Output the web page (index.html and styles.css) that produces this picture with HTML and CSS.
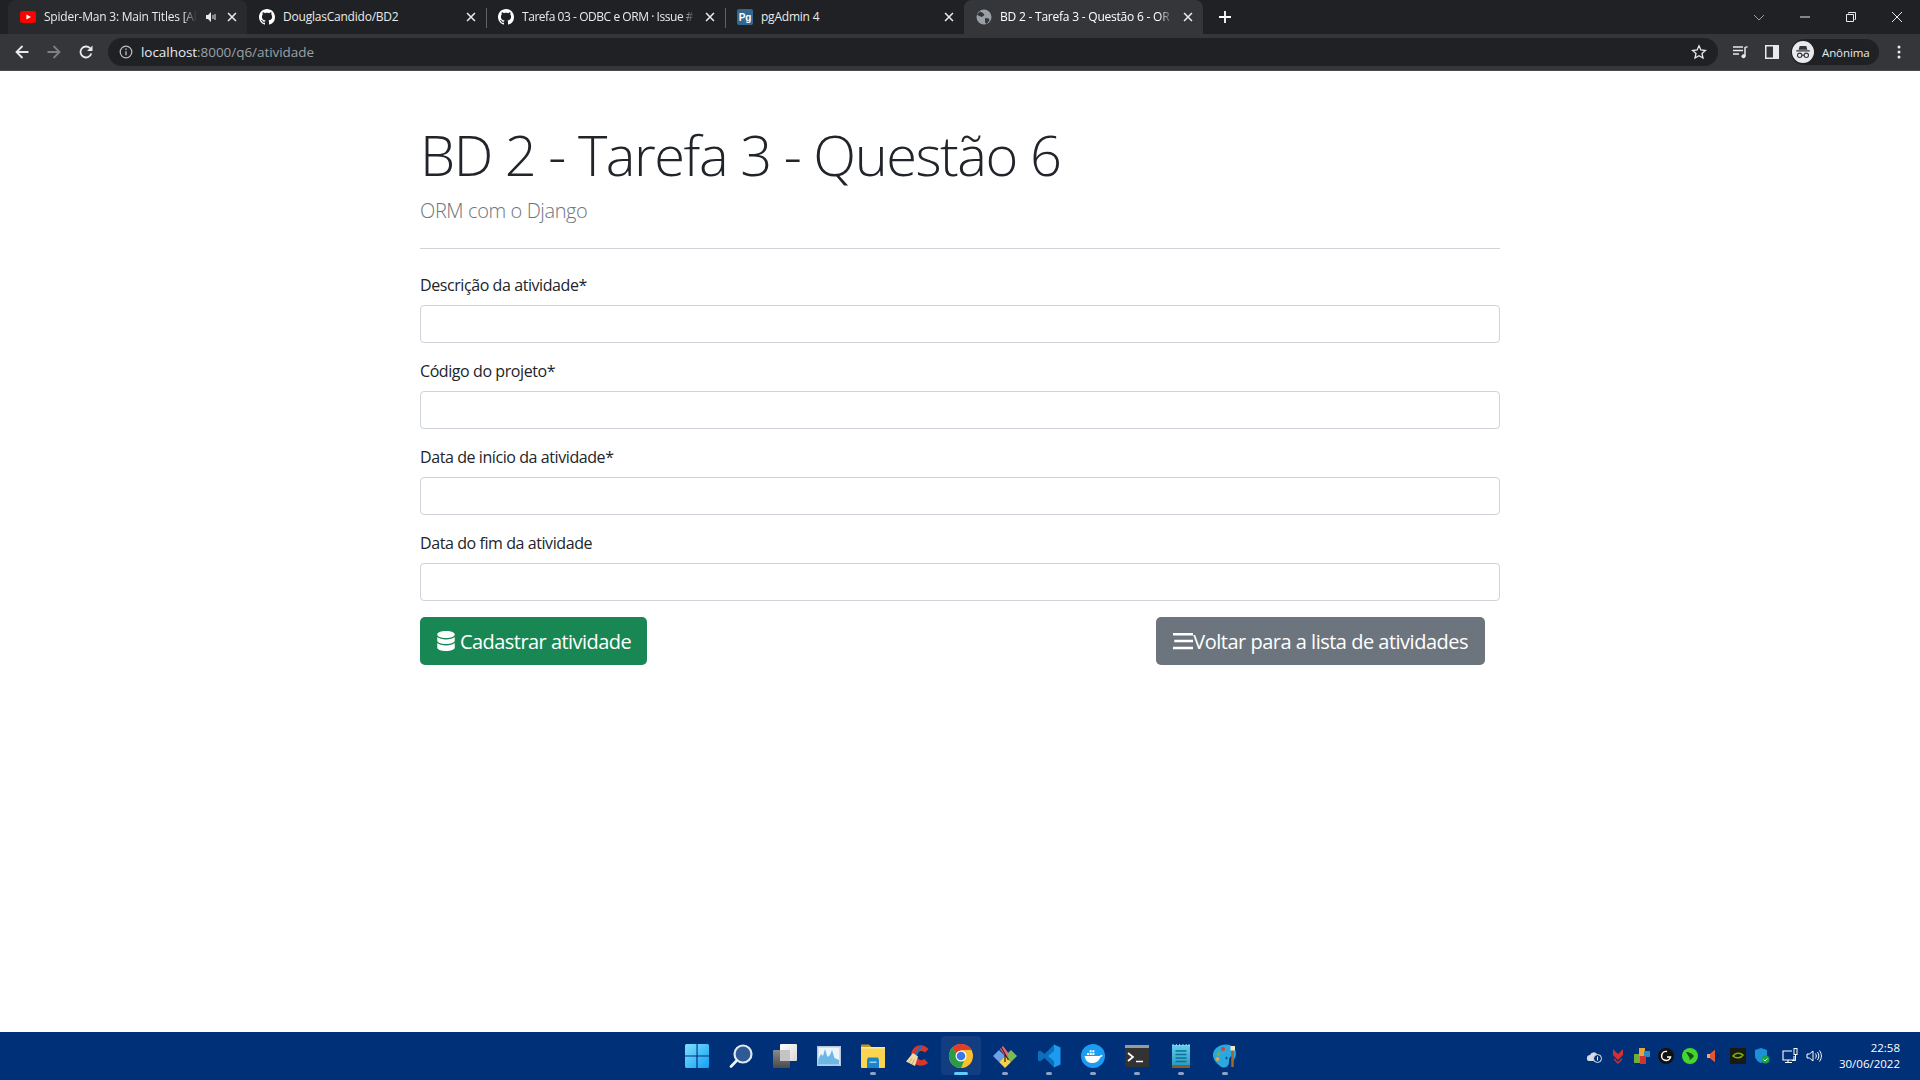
FILE: index.html
```html
<!DOCTYPE html>
<html lang="pt-BR">
<head>
    <meta charset="UTF-8">
    <meta name="viewport" content="width=device-width, initial-scale=1.0">
    <title>BD 2 - Tarefa 3 - Questão 6 - ORM</title>
    <link rel="stylesheet" href="styles.css">
</head>
<body>
    <svg class="sprites" width="0" height="0">
        <defs>
            <linearGradient id="win-blue" x1="0" y1="0" x2="1" y2="1">
                <stop offset="0" stop-color="#7fe0fb"/>
                <stop offset="1" stop-color="#10a0f5"/>
            </linearGradient>
            <linearGradient id="view-back" x1="0" y1="0" x2="1" y2="1">
                <stop offset="0" stop-color="#ffffff"/>
                <stop offset="1" stop-color="#d8d8d8"/>
            </linearGradient>
            <linearGradient id="view-front" x1="0" y1="0" x2="0" y2="1">
                <stop offset="0" stop-color="#8a8a8a"/>
                <stop offset="1" stop-color="#4a4a4a"/>
            </linearGradient>
            <linearGradient id="note-teal" x1="0" y1="0" x2="0" y2="1">
                <stop offset="0" stop-color="#62d0ee"/>
                <stop offset="1" stop-color="#2596bd"/>
            </linearGradient>
        </defs>
        <symbol id="github" viewBox="0 0 16 16">
            <path fill="#fff" d="M8 0C3.58 0 0 3.58 0 8c0 3.54 2.29 6.53 5.47 7.59.4.07.55-.17.55-.38 0-.19-.01-.82-.01-1.49-2.01.37-2.53-.49-2.69-.94-.09-.23-.48-.94-.82-1.13-.28-.15-.68-.52-.01-.53.63-.01 1.08.58 1.23.82.72 1.21 1.87.87 2.33.66.07-.52.28-.87.51-1.07-1.78-.2-3.64-.89-3.64-3.95 0-.87.31-1.59.82-2.15-.08-.2-.36-1.02.08-2.12 0 0 .67-.21 2.2.82.64-.18 1.32-.27 2-.27s1.36.09 2 .27c1.53-1.04 2.2-.82 2.2-.82.44 1.1.16 1.92.08 2.12.51.56.82 1.27.82 2.15 0 3.07-1.87 3.75-3.65 3.95.29.25.54.73.54 1.48 0 1.07-.01 1.93-.01 2.2 0 .21.15.46.55.38A8 8 0 0 0 16 8c0-4.42-3.58-8-8-8z"/>
        </symbol>
        <symbol id="close" viewBox="0 0 16 16">
            <path stroke="#e8eaed" stroke-width="1.8" fill="none" d="M3.5 3.5l9 9M12.5 3.5l-9 9"/>
        </symbol>
    </svg>

    <div class="tabstrip">
        <div class="tab tab-hover">
            <svg class="favicon" viewBox="0 0 16 16"><rect y="2" width="16" height="12" rx="3" fill="#f00"/><path d="M6.4 5.4v5.2L11 8z" fill="#fff"/></svg>
            <span class="tab-title tab-fade">Spider-Man 3: Main Titles [Al</span>
            <svg class="tab-audio" viewBox="0 0 12 12"><path d="M1 4h2l3-3v10L3 8H1z" fill="#e8eaed"/><path d="M8 4v4M10 3v6" stroke="#e8eaed"/></svg>
            <svg class="tab-close"><use href="#close"/></svg>
        </div>
        <div class="tab">
            <svg class="favicon"><use href="#github"/></svg>
            <span class="tab-title">DouglasCandido/BD2</span>
            <svg class="tab-close"><use href="#close"/></svg>
        </div>
        <div class="tab tab-sep">
            <svg class="favicon"><use href="#github"/></svg>
            <span class="tab-title tab-fade tab-title-tight">Tarefa 03 - ODBC e ORM · Issue #</span>
            <svg class="tab-close"><use href="#close"/></svg>
        </div>
        <div class="tab tab-sep">
            <svg class="favicon" viewBox="0 0 16 16"><rect width="16" height="16" rx="2" fill="#336791"/><text x="8" y="12" class="pg-text">Pg</text></svg>
            <span class="tab-title">pgAdmin 4</span>
            <svg class="tab-close"><use href="#close"/></svg>
        </div>
        <div class="tab tab-active">
            <svg class="favicon" viewBox="0 0 16 16"><circle cx="8" cy="8" r="7.5" fill="#9aa0a6"/><path d="M4 2.5l3 1.5 1.5 2-2.500 2-3-1-2-1.500zM9 9l4 .5.500 2-3 3.500-1.500-1.500z" fill="#35363a"/></svg>
            <span class="tab-title tab-fade">BD 2 - Tarefa 3 - Questão 6 - OR</span>
            <svg class="tab-close"><use href="#close"/></svg>
        </div>
        <svg class="new-tab" viewBox="0 0 14 14"><path d="M7 1v12M1 7h12" stroke="#fff" stroke-width="1.800"/></svg>
        <div class="window-controls">
            <svg class="win-icon" viewBox="0 0 12 12"><path d="M1 4l5 5 5-5" stroke="#9aa0a6" fill="none"/></svg>
            <svg class="win-icon" viewBox="0 0 12 12"><path d="M1 6h10" stroke="#e8eaed"/></svg>
            <svg class="win-icon" viewBox="0 0 12 12"><path d="M3.500 2.500V1.500h7v7h-1M1.500 3.500h7v7h-7z" stroke="#e8eaed" fill="none"/></svg>
            <svg class="win-icon" viewBox="0 0 12 12"><path d="M1 1l10 10M11 1L1 11" stroke="#e8eaed"/></svg>
        </div>
    </div>

    <div class="toolbar">
        <svg class="nav-icon" viewBox="0 0 16 16"><path d="M14.500 8H3M8.500 2L2.500 8l6 6" stroke="#e8eaed" stroke-width="1.800" fill="none"/></svg>
        <svg class="nav-icon" viewBox="0 0 16 16"><path d="M1.500 8H13M7.500 2l6 6-6 6" stroke="#7d7f83" stroke-width="1.800" fill="none"/></svg>
        <svg class="nav-icon" viewBox="0 0 16 16"><path d="M13.300 9.500A5.500 5.500 0 1 1 12 4.200" stroke="#e8eaed" stroke-width="1.800" fill="none"/><path d="M14.500 1.500v5.500H9z" fill="#e8eaed"/></svg>
        <div class="omnibox">
            <svg class="info-icon" viewBox="0 0 14 14"><circle cx="7" cy="7" r="5.800" stroke="#bdc1c6" stroke-width="1.200" fill="none"/><path d="M7 6.200v4M7 3.600v1.400" stroke="#bdc1c6" stroke-width="1.300"/></svg>
            <span class="url"><b>localhost</b>:8000/q6/atividade</span>
            <svg class="star-icon" viewBox="0 0 16 16"><path d="M8 1.800l1.900 4.200 4.500.5-3.400 3 1 4.500L8 11.700 4 14l1-4.500-3.400-3 4.500-.5z" stroke="#e8eaed" stroke-width="1.300" fill="none"/></svg>
        </div>
        <svg class="tool-icon media-icon" viewBox="0 0 16 16"><path d="M1 3h10M1 6.500h10M1 10h6" stroke="#e8eaed" stroke-width="1.400"/><path d="M13 3v9" stroke="#e8eaed" stroke-width="1.500"/><path d="M13.500 3H15.500" stroke="#e8eaed" stroke-width="1.500"/><circle cx="11.500" cy="12.300" r="2" fill="#e8eaed"/></svg>
        <svg class="tool-icon panel-icon" viewBox="0 0 14 14"><rect width="14" height="14" fill="#e8eaed"/><rect x="1.500" y="1.500" width="6.500" height="11" fill="#35363a"/></svg>
        <div class="profile-chip">
            <svg class="avatar" viewBox="0 0 20 20"><circle cx="10" cy="10" r="10" fill="#e8eaed"/><path d="M7 4.500h6l1 3.500H6zM3.800 8.500h12.400v1H3.800z" fill="#35363a"/><circle cx="7" cy="13" r="2" stroke="#35363a" fill="none"/><circle cx="13" cy="13" r="2" stroke="#35363a" fill="none"/><path d="M9 13h2" stroke="#35363a"/></svg>
            <span class="profile-name">Anônima</span>
        </div>
        <svg class="tool-icon kebab" viewBox="0 0 4 16"><circle cx="2" cy="3" r="1.500" fill="#e8eaed"/><circle cx="2" cy="8" r="1.500" fill="#e8eaed"/><circle cx="2" cy="13" r="1.500" fill="#e8eaed"/></svg>
    </div>

    <main class="page">
        <div class="container">
            <h1 class="title">BD 2 - Tarefa 3 - Questão 6</h1>
            <p class="lead">ORM com o Django</p>
            <hr class="divider">
            <form class="activity-form">
                <label for="descricao">Descrição da atividade*</label>
                <input type="text" id="descricao">
                <label for="codigo">Código do projeto*</label>
                <input type="text" id="codigo">
                <label for="inicio">Data de início da atividade*</label>
                <input type="text" id="inicio">
                <label for="fim">Data do fim da atividade</label>
                <input type="text" id="fim">
                <div class="actions">
                    <button type="submit" class="btn btn-success">
                        <svg class="btn-icon" viewBox="0 0 16 16"><path fill="#fff" d="M8 0c4 0 7 1.200 7 2.800S12 5.600 8 5.600 1 4.400 1 2.800 4 0 8 0zM1 4.800c1.300 1.300 4 2 7 2s5.700-.7 7-2v2.800C15 9.200 12 10.400 8 10.400S1 9.200 1 7.600zM1 9.600c1.300 1.300 4 2 7 2s5.700-.7 7-2v3.600C15 14.800 12 16 8 16s-7-1.200-7-2.800z"/></svg>
                        Cadastrar atividade
                    </button>
                    <a href="#" class="btn btn-secondary">
                        <svg class="btn-icon btn-icon-tight" viewBox="0 0 16 16"><path d="M0 2.500h16M1 8h15M0 13.500h16" stroke="#fff" stroke-width="2"/></svg>
                        Voltar para a lista de atividades
                    </a>
                </div>
            </form>
        </div>
    </main>

    <footer class="taskbar">
        <div class="taskbar-apps">
            <div class="app">
                <svg class="app-icon" viewBox="0 0 24 24"><path d="M0 1.500A1.500 1.500 0 0 1 1.500 0h10v11.400H0zM12.600 0h10A1.500 1.500 0 0 1 24 1.500v9.900H12.600zM0 12.600h11.400V24h-10A1.500 1.500 0 0 1 0 22.500zM12.600 12.600H24v9.900a1.500 1.500 0 0 1-1.500 1.500h-9.900z" fill="url(#win-blue)"/></svg>
            </div>
            <div class="app">
                <svg class="app-icon" viewBox="0 0 24 24"><circle cx="14" cy="10" r="8.500" fill="#2f5a96" stroke="#dfe8f2" stroke-width="2.200"/><path d="M7.800 16.500L2 22.500" stroke="#f2f5f8" stroke-width="2.600" stroke-linecap="round"/></svg>
            </div>
            <div class="app">
                <svg class="app-icon" viewBox="0 0 24 24"><rect x="7" y="0" width="17" height="17" rx="1" fill="url(#view-back)"/><rect x="0" y="6" width="17" height="18" rx="1" fill="url(#view-front)"/><rect x="7" y="6" width="10" height="11" fill="#c4c4c4"/></svg>
            </div>
            <div class="app">
                <svg class="app-icon" viewBox="0 0 24 24"><rect y="2" width="24" height="20" fill="#b9c9d8"/><rect x="1.500" y="3.500" width="21" height="17" fill="#eaf6fc"/><path d="M1.500 15l2.500-5 2 2 2-7 2.500 8 2.500-2 2-5 2.500 8 4.500 2v4.500h-21z" fill="#6bb7e6"/></svg>
            </div>
            <div class="app app-open">
                <svg class="app-icon" viewBox="0 0 24 24"><path d="M0 1.500A1 1 0 0 1 1 .500h7l3 3v2H0z" fill="#c9961c"/><rect y="3" width="24" height="21" rx="1" fill="#fcd450"/><rect y="3" width="24" height="1.500" fill="#f5e9a8"/><path d="M6 16l1-2.500h10l1 2.500v8H6z" fill="#1a86c8"/><rect x="8.500" y="17.500" width="7" height="1.500" fill="#8fd0f0"/></svg>
            </div>
            <div class="app">
                <svg class="app-icon" viewBox="0 0 24 24"><path d="M23.500 5C20 .5 13.500 0 9.500 3.500 5 7.500 5 15 9 19c3.500 3.500 10 3.500 14 0l-3.500-4c-2 1.500-4.500 1.500-6 .0-2-2-2-5 0-7 1.500-1.500 4.500-1.500 6.500.5z" fill="#d9362b"/><path d="M16.500 2L9.500 12" stroke="#1f70b8" stroke-width="2.400"/><path d="M8 9l5 3.500-3 9.500-9-4.500z" fill="#f0d9a8"/><path d="M4 18.500l3-4M7 20l2.500-4.500" stroke="#c8a76a"/></svg>
            </div>
            <div class="app app-active">
                <svg class="app-icon" viewBox="0 0 24 24"><circle cx="12" cy="12" r="12" fill="#fbc02d"/><path d="M12 12L6.800 9 3.500 3.500A12 12 0 0 1 22.400 6H12z" fill="#e33b2e"/><path d="M12 12L6.800 9 3.500 3.500A12 12 0 0 0 12 24l3-7z" fill="#2a9c46"/><circle cx="12" cy="12" r="5.500" fill="#fff"/><circle cx="12" cy="12" r="4.300" fill="#3b78e7"/></svg>
                <span class="active-mark"></span>
            </div>
            <div class="app app-open">
                <svg class="app-icon" viewBox="0 0 24 24"><path d="M0 12l6-6 6 6-6 6z" fill="#6f9fe6"/><path d="M12 12l6-6 6 6-6 6z" fill="#7cba54"/><path d="M6 18l6-6 6 6-6 6z" fill="#f5d24a"/><path d="M7 5l3-3 6 8-3 3z" fill="#ef6a78"/><path d="M8 3l7.500 13M12 10v8" stroke="#3a2a2a" stroke-width="1.300"/></svg>
            </div>
            <div class="app app-open">
                <svg class="app-icon" viewBox="0 0 24 24"><path d="M17 .500L7.500 10 3 6.500 1 7.500v9L3 17.500 7.500 14l9.500 9.500z" fill="#0b6fbd"/><path d="M17 .500l6.500 3v17l-6.500 3zM17 7L11 12l6 5z" fill="#1d9bf0" fill-rule="evenodd"/></svg>
            </div>
            <div class="app app-open">
                <svg class="app-icon" viewBox="0 0 24 24"><circle cx="12" cy="12" r="12" fill="#1a9cf0"/><path d="M3.500 12h15c.8-.8 1.800-1.200 3-1-.3 1.500-1.300 2.200-2.300 2.400C18 17 15 19 11 19c-4 0-6.500-2.500-7.500-7z" fill="#fff"/><path d="M6 9h2v2H6zM8.700 9h2v2h-2zM11.400 9h2v2h-2zM8.700 6.300h2v2h-2zM11.400 6.300h2v2h-2z" fill="#fff"/></svg>
            </div>
            <div class="app app-open">
                <svg class="app-icon" viewBox="0 0 24 24"><rect y="1" width="24" height="22" rx="1" fill="#333"/><rect y="1" width="24" height="3" fill="#9a9a9a"/><path d="M3 9l5 4-5 4" stroke="#fff" stroke-width="1.700" fill="none"/><path d="M11 17.500h7" stroke="#fff" stroke-width="1.500"/></svg>
            </div>
            <div class="app app-open">
                <svg class="app-icon" viewBox="0 0 24 24"><rect x="3" y="1" width="18" height="22" fill="url(#note-teal)"/><rect x="3" y="21" width="18" height="3" fill="#8a5a2a"/><path d="M4 0v2M7.300 0v2M10.600 0v2M13.900 0v2M17.200 0v2M20 0v2" stroke="#a7dfef"/><path d="M6.500 7h11M6.500 10.500h11M6.500 14h11M6.500 17.500h11" stroke="#0f6f96" stroke-width="1.500"/></svg>
            </div>
            <div class="app app-open">
                <svg class="app-icon" viewBox="0 0 24 24"><path d="M13 .500c6 0 10 4 10 9 0 3-2 6-3 8l-1-6c-2 1-3 3-3 5 0 3 0 4-2 6s-5 1-7-.5C3 19 0 15 0 11 0 5 6 .5 13 .5z" fill="#2aa8e0"/><circle cx="5.500" cy="10" r="2" fill="#6fb34a"/><circle cx="10" cy="5" r="2" fill="#e33b2e"/><circle cx="4.500" cy="15" r="2" fill="#e8a33a"/><path d="M12 14h3M13.500 12.500v3" stroke="#0b5c9a"/><path d="M19.500 5v18" stroke="#a0682c" stroke-width="2.500"/><rect x="17.500" y="2" width="4.500" height="4.500" fill="#f0e4c8"/></svg>
            </div>
        </div>
        <div class="tray">
            <svg class="tray-icon" viewBox="0 0 16 16"><path d="M1 10a3 3 0 0 1 3-3 4 4 0 0 1 7-1v7H3a2.500 2.500 0 0 1-2-3z" fill="#d6dce4"/><circle cx="11.500" cy="10.500" r="4" fill="#003078" stroke="#e8eaed"/><path d="M11.500 8.500v4" stroke="#e8eaed"/></svg>
            <svg class="tray-icon" viewBox="0 0 16 16"><path d="M3 1l5 5 5-5v6l-5 5-5-5z" fill="#d62f2f"/><path d="M4 10l4 4 4-4v2l-4 4-4-4z" fill="#d62f2f"/></svg>
            <svg class="tray-icon" viewBox="0 0 16 16"><rect x="0" y="6" width="6" height="9" fill="#6fae3f"/><rect x="5" y="0" width="6" height="8" fill="#e8a33a"/><rect x="10" y="3" width="6" height="6" fill="#2a8fc0"/><rect x="6" y="8" width="6" height="8" fill="#d62f2f"/></svg>
            <svg class="tray-icon" viewBox="0 0 16 16"><circle cx="8" cy="8" r="8" fill="#111"/><path d="M9 3.500a4.500 4.500 0 1 0 3.500 5.500H9" stroke="#fff" stroke-width="1.500" fill="none"/></svg>
            <svg class="tray-icon" viewBox="0 0 16 16"><circle cx="8" cy="8" r="8" fill="#44d62c"/><path d="M4 4c3 0 7 2 8 4-1 2-4 4-5 4 1-1 1-2 0-3-1-2-2-3-3-5z" fill="#14501a"/></svg>
            <svg class="tray-icon" viewBox="0 0 16 16"><path d="M1 6h3l5-4v12l-5-4H1z" fill="#f0a080"/><path d="M9 2v12l-5-4V6z" fill="#e2572b"/><path d="M11 5c1.500 2 1.500 4 0 6" stroke="#0a1e44" stroke-width="1.300" fill="none"/></svg>
            <svg class="tray-icon" viewBox="0 0 16 16"><rect width="16" height="16" fill="#1a1a10"/><path d="M3 8c2-3 7-4 10-1-2 3-7 4-10 1z" stroke="#76b900" stroke-width="1.500" fill="none"/></svg>
            <svg class="tray-icon" viewBox="0 0 16 16"><path d="M7 0l6 2v6c0 3-3 6-6 7-3-1-6-4-6-7V2z" fill="#1e90d8"/><circle cx="11.500" cy="11.500" r="4" fill="#16a34a"/><path d="M9.500 11.500l1.500 1.500 2.500-2.500" stroke="#fff" fill="none"/></svg>
            <svg class="tray-icon tray-network" viewBox="0 0 16 16"><path d="M10 3H1v9h11V8M6 12v2.500M3 14.500h7" stroke="#fff" stroke-width="1.100" fill="none"/><rect x="12" y=".5" width="3" height="6" stroke="#fff" fill="none"/><path d="M13.500 6.500v6H10" stroke="#fff" fill="none"/></svg>
            <svg class="tray-icon" viewBox="0 0 16 16"><path d="M1 6h2.500L7 3v10L3.500 10H1z" stroke="#fff" fill="none"/><path d="M9.500 5.500c1 1.500 1 3.500 0 5M11.500 4c1.800 2.500 1.800 5.500 0 8M13.500 2.500c2.500 3.500 2.500 7.500 0 11" stroke="#fff" fill="none"/></svg>
            <div class="clock">
                <span>22:58</span>
                <span>30/06/2022</span>
            </div>
        </div>
    </footer>
</body>
</html>
```

FILE: styles.css
```css
* {
    box-sizing: border-box;
}

html, body {
    height: 100%;
}

body {
    margin: 0;
    display: flex;
    flex-direction: column;
    height: 1080px;
    overflow: hidden;
    background-color: #fff;
    font-family: "Open Sans", "Noto Sans", sans-serif;
    color: #212529;
}

.sprites {
    position: absolute;
}

/* browser tabs */
.tabstrip {
    display: flex;
    align-items: center;
    height: 34px;
    padding-left: 8px;
    background-color: #202124;
}

.tab {
    position: relative;
    display: flex;
    align-items: center;
    flex: none;
    width: 239px;
    height: 34px;
    padding: 0 8px 0 12px;
    color: #e8eaed;
    font-size: 12px;
    letter-spacing: -0.22px;
}

.tab-hover {
    background-color: #292a2d;
    border-radius: 8px 8px 0 0;
}

.tab-active {
    background-color: #35363a;
    border-radius: 8px 8px 0 0;
    color: #fff;
}

.tab-sep::before {
    content: "";
    position: absolute;
    left: 0;
    top: 8px;
    height: 20px;
    border-left: 1px solid #5f6368;
}

.favicon {
    flex: none;
    width: 16px;
    height: 16px;
    margin-right: 8px;
}

.pg-text {
    fill: #fff;
    font-family: "Liberation Sans", sans-serif;
    font-size: 10px;
    font-weight: 700;
    text-anchor: middle;
}

.tab-title {
    flex: 1;
    min-width: 0;
    padding-bottom: 1px;
    overflow: hidden;
    white-space: nowrap;
}

.tab-fade {
    mask-image: linear-gradient(to left, transparent, #000 14px);
}

.tab-title-tight {
    letter-spacing: -0.45px;
}

.tab-audio {
    flex: none;
    width: 12px;
    height: 12px;
    margin-left: 8px;
}

.tab-close {
    flex: none;
    width: 14px;
    height: 14px;
    margin-left: 8px;
}

.new-tab {
    flex: none;
    width: 14px;
    height: 14px;
    margin-left: 15px;
}

.window-controls {
    display: flex;
    align-items: center;
    gap: 34px;
    margin-left: auto;
    padding-right: 17px;
}

.win-icon {
    width: 12px;
    height: 12px;
}

/* address bar */
.toolbar {
    display: flex;
    align-items: center;
    height: 37px;
    padding: 0 19px 0 14px;
    background-color: #35363a;
    border-bottom: 1px solid #4a4b4f;
}

.nav-icon {
    flex: none;
    width: 16px;
    height: 16px;
    margin-right: 16px;
}

.omnibox {
    display: flex;
    align-items: center;
    flex: 1;
    height: 28px;
    margin-left: -2px;
    padding: 0 11px 0 11px;
    background-color: #202124;
    border-radius: 14px;
}

.info-icon {
    width: 14px;
    height: 14px;
    margin-right: 8px;
}

.url {
    flex: 1;
    color: #9aa0a6;
    font-size: 13.500px;
    letter-spacing: -0.05px;
}

.url b {
    color: #e8eaed;
    font-weight: 400;
}

.star-icon {
    width: 16px;
    height: 16px;
}

.tool-icon {
    flex: none;
    width: 16px;
    height: 16px;
}

.media-icon {
    margin-left: 14px;
}

.panel-icon {
    margin-left: 17px;
    width: 14px;
    height: 14px;
}

.profile-chip {
    display: flex;
    align-items: center;
    flex: none;
    width: 88px;
    height: 26px;
    margin-left: 12px;
    padding-left: 1px;
    background-color: #202124;
    border-radius: 13px;
}

.avatar {
    width: 22px;
    height: 22px;
    margin-right: 8px;
}

.profile-name {
    color: #e8eaed;
    font-size: 11.500px;
    letter-spacing: -0.1px;
}

.kebab {
    width: 4px;
    margin-left: 18px;
}

/* page content */
.page {
    flex: 1;
    min-height: 0;
}

.container {
    width: 1080px;
    margin: 0 auto;
    padding-top: 50px;
}

.title {
    margin: 0;
    font-size: 56px;
    font-weight: 300;
    line-height: 1.2;
    letter-spacing: -1.48px;
}

.lead {
    margin: 11px 0 0;
    color: #6c757d;
    font-size: 20px;
    font-weight: 300;
    line-height: 1.2;
    letter-spacing: -0.4px;
}

.divider {
    margin: 25px 0 24px;
    border: 0;
    border-top: 1px solid #ced4da;
}

.activity-form {
    display: flex;
    flex-direction: column;
}

label {
    margin-bottom: 8px;
    font-size: 16px;
    line-height: 24px;
    letter-spacing: -0.42px;
}

input[type="text"] {
    height: 38px;
    margin-bottom: 16px;
    padding: 6px 12px;
    border: 1px solid #ced4da;
    border-radius: 4px;
}

.actions {
    display: flex;
    justify-content: space-between;
    padding-right: 15px;
}

.btn {
    display: flex;
    align-items: center;
    height: 48px;
    padding: 0 16px;
    border: 0;
    border-radius: 5px;
    color: #fff;
    font-family: inherit;
    font-size: 20px;
    letter-spacing: -0.55px;
    text-decoration: none;
}

.btn-success {
    background-color: #198754;
}

.btn-secondary {
    padding: 0 17px;
    background-color: #6c757d;
    letter-spacing: -0.5px;
}

.btn-icon {
    width: 20px;
    height: 20px;
    margin-right: 4px;
}

.btn-icon-tight {
    margin-right: 0;
}

/* windows taskbar */
.taskbar {
    position: relative;
    display: flex;
    justify-content: center;
    align-items: center;
    flex: none;
    height: 48px;
    padding-left: 2px;
    background-color: #003078;
}

.taskbar-apps {
    display: flex;
    align-items: center;
}

.app {
    position: relative;
    display: flex;
    justify-content: center;
    align-items: center;
    width: 44px;
    height: 44px;
}

.app-icon {
    position: relative;
    width: 24px;
    height: 24px;
}

.app-open::after {
    content: "";
    position: absolute;
    bottom: 3px;
    left: 19px;
    width: 6px;
    height: 3px;
    border-radius: 2px;
    background-color: #8fa3c4;
}

.app-active::before {
    content: "";
    position: absolute;
    top: 2px;
    right: 2px;
    bottom: 3px;
    left: 2px;
    background-color: rgba(255, 255, 255, 0.07);
    border-radius: 4px;
}

.active-mark {
    position: absolute;
    bottom: 3px;
    left: 15px;
    width: 14px;
    height: 3px;
    border-radius: 2px;
    background-color: #60cdff;
}

.tray {
    position: absolute;
    top: 0;
    right: 20px;
    bottom: 0;
    display: flex;
    align-items: center;
}

.tray-icon {
    width: 16px;
    height: 16px;
    margin-right: 8px;
}

.tray-network {
    margin-left: 4px;
}

.clock {
    display: flex;
    flex-direction: column;
    align-items: flex-end;
    margin-left: 9px;
    color: #fff;
    font-size: 11.500px;
    line-height: 16px;
}
```
